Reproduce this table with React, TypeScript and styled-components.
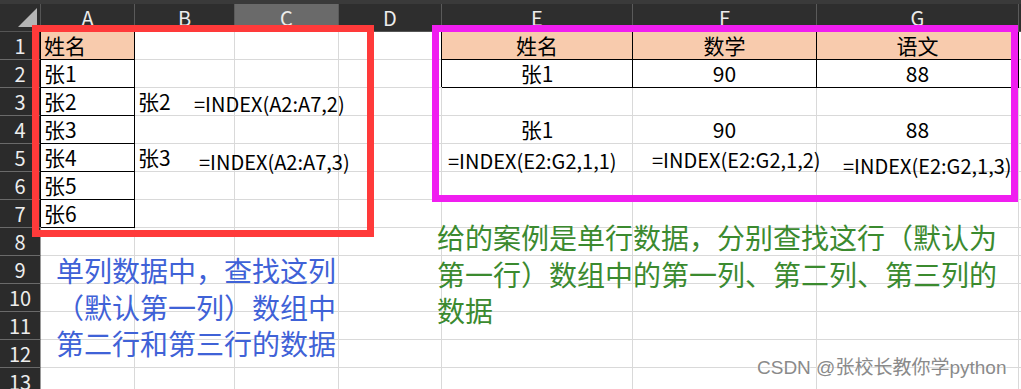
import styled, { createGlobalStyle, css } from "styled-components";

const GlobalStyle = createGlobalStyle`
  html, body {
    margin: 0;
    padding: 0;
    background: #fff;
  }
  body {
    font-family: "Noto Sans CJK SC", sans-serif;
    overflow: hidden;
  }
`;

const COLS = ["A", "B", "C", "D", "E", "F", "G", ""];
const ROW_COUNT = 13;

type CellData = {
  text: string;
  fill?: boolean;
  boxed?: boolean;
  center?: boolean;
};

const cells: Record<string, CellData> = {
  A1: { text: "姓名", fill: true, boxed: true },
  A2: { text: "张1", boxed: true },
  A3: { text: "张2", boxed: true },
  A4: { text: "张3", boxed: true },
  A5: { text: "张4", boxed: true },
  A6: { text: "张5", boxed: true },
  A7: { text: "张6", boxed: true },
  B3: { text: "张2" },
  B5: { text: "张3" },
  E1: { text: "姓名", fill: true, boxed: true, center: true },
  F1: { text: "数学", fill: true, boxed: true, center: true },
  G1: { text: "语文", fill: true, boxed: true, center: true },
  E2: { text: "张1", boxed: true, center: true },
  F2: { text: "90", boxed: true, center: true },
  G2: { text: "88", boxed: true, center: true },
  E4: { text: "张1", center: true },
  F4: { text: "90", center: true },
  G4: { text: "88", center: true },
};

// floating text boxes laid over the sheet
const formulas = [
  { text: "=INDEX(A2:A7,2)", x: 194, y: 90 },
  { text: "=INDEX(A2:A7,3)", x: 199, y: 148 },
  { text: "=INDEX(E2:G2,1,1)", x: 448, y: 147 },
  { text: "=INDEX(E2:G2,1,2)", x: 652, y: 146 },
  { text: "=INDEX(E2:G2,1,3)", x: 843, y: 152 },
];

const Page = styled.div`
  position: relative;
  width: 1021px;
  height: 389px;
  overflow: hidden;
  background: #fff;
`;

const TopStrip = styled.div`
  height: 4px;
  background: #3a3a3a;
`;

const Sheet = styled.div`
  display: grid;
  grid-template-columns: 41px 94px 100px 104px 103px 191px 184px 202px 1fr;
  grid-auto-rows: 28px;
`;

const Corner = styled.div`
  background: #2d2d2d;
  border-right: 1px solid #555;
  border-bottom: 1px solid #555;
  box-sizing: border-box;

  svg {
    display: block;
  }
`;

const ColHead = styled.div<{ $active?: boolean }>`
  box-sizing: border-box;
  background: ${(p) => (p.$active ? "#6a6a6a" : "#2e2e2e")};
  border-right: 1px solid #5a5a5a;
  border-bottom: 1px solid #555;
  color: #ececec;
  font-size: 20px;
  line-height: 27px;
  text-align: center;
`;

const RowHead = styled.div`
  box-sizing: border-box;
  background: #2b2b2b;
  border-right: 1px solid #9a9a9a;
  border-bottom: 1px solid #6a6a6a;
  color: #ededed;
  font-size: 20px;
  line-height: 27px;
  text-align: center;
`;

const Cell = styled.div<{ $fill?: boolean; $boxed?: boolean; $center?: boolean }>`
  box-sizing: border-box;
  background: ${(p) => (p.$fill ? "#f8cbad" : "#fff")};
  border-right: 1px solid #d9d9d9;
  border-bottom: 1px solid #d9d9d9;
  padding: 0 3px;
  color: #000;
  font-size: 21px;
  line-height: 27px;
  white-space: nowrap;
  text-align: ${(p) => (p.$center ? "center" : "left")};

  ${(p) =>
    p.$boxed &&
    css`
      border-right-color: #000;
      border-bottom-color: #000;
      box-shadow: -1px -1px 0 #000;
    `}
`;

const Formula = styled.div<{ $x: number; $y: number }>`
  position: absolute;
  left: ${(p) => p.$x}px;
  top: ${(p) => p.$y}px;
  font-size: 20px;
  line-height: 28px;
  color: #000;
  white-space: nowrap;
`;

const Frame = styled.div<{ $x: number; $y: number; $w: number; $h: number; $color: string }>`
  position: absolute;
  left: ${(p) => p.$x}px;
  top: ${(p) => p.$y}px;
  width: ${(p) => p.$w}px;
  height: ${(p) => p.$h}px;
  border: 7px solid ${(p) => p.$color};
  box-sizing: border-box;
  pointer-events: none;
`;

const Note = styled.div<{ $x: number; $y: number; $color: string }>`
  position: absolute;
  left: ${(p) => p.$x}px;
  top: ${(p) => p.$y}px;
  color: ${(p) => p.$color};
  font-size: 28px;
  line-height: 36.6px;
  white-space: nowrap;
`;

const Watermark = styled.div`
  position: absolute;
  left: 757px;
  top: 356px;
  font-family: "Liberation Sans", "Noto Sans CJK SC", sans-serif;
  font-size: 19px;
  line-height: 24px;
  color: #8a8a8a;
  text-shadow: 0 0 2px #fff, 0 0 2px #fff;
  white-space: nowrap;
`;

export default function App() {
  const rows = Array.from({ length: ROW_COUNT }, (_, i) => i + 1);

  return (
    <Page>
      <GlobalStyle />
      <TopStrip />
      <Sheet>
        <Corner>
          <svg width="40" height="27" viewBox="0 0 40 27">
            <polygon points="18,23 37,23 37,4" fill="#b5b5b5" />
          </svg>
        </Corner>
        {COLS.map((c, i) => (
          <ColHead key={`h${i}`} $active={c === "C"}>
            {c}
          </ColHead>
        ))}
        {rows.map((r) => [
          <RowHead key={`r${r}`}>{r}</RowHead>,
          ...COLS.map((c, i) => {
            const d = c ? cells[`${c}${r}`] : undefined;
            return (
              <Cell key={`${r}-${i}`} $fill={d?.fill} $boxed={d?.boxed} $center={d?.center}>
                {d?.text}
              </Cell>
            );
          }),
        ])}
      </Sheet>

      {formulas.map((f) => (
        <Formula key={f.text + f.x} $x={f.x} $y={f.y}>
          {f.text}
        </Formula>
      ))}

      <Frame $x={32} $y={25} $w={342} $h={212} $color="#ff3a3a" />
      <Frame $x={432} $y={25} $w={586} $h={177} $color="#f01ef0" />

      <Note $x={56} $y={252} $color="#3f62d7">
        单列数据中，查找这列
        <br />
        （默认第一列）数组中
        <br />
        第二行和第三行的数据
      </Note>
      <Note $x={437} $y={219} $color="#3b8a2f">
        给的案例是单行数据，分别查找这行（默认为
        <br />
        第一行）数组中的第一列、第二列、第三列的
        <br />
        数据
      </Note>

      <Watermark>CSDN @张校长教你学python</Watermark>
    </Page>
  );
}
